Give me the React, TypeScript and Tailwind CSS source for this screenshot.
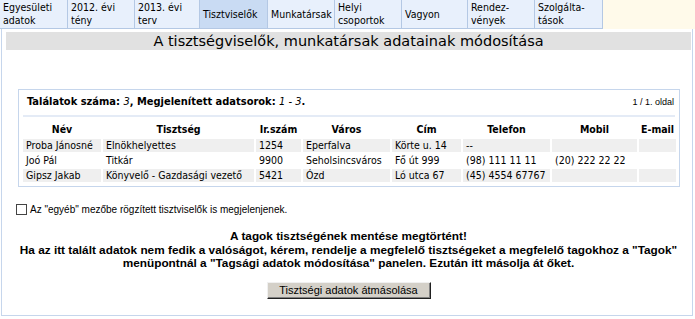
import React from "react";

const tabs: { lines: string[]; cls: string; active?: boolean }[] = [
  { lines: ["Egyesületi", "adatok"], cls: "w-[68px]" },
  { lines: ["2012. évi", "tény"], cls: "w-[67px]" },
  { lines: ["2013. évi", "terv"], cls: "w-[65px]" },
  { lines: ["Tisztviselők"], cls: "w-[68px]", active: true },
  { lines: ["Munkatársak"], cls: "w-[67px]" },
  { lines: ["Helyi", "csoportok"], cls: "w-[67px]" },
  { lines: ["Vagyon"], cls: "w-[66px]" },
  { lines: ["Rendez-", "vények"], cls: "w-[67px]" },
  { lines: ["Szolgálta-", "tások"], cls: "w-[68px]" },
];

const cols = [
  { h: "Név", w: "w-[78px]" },
  { h: "Tisztség", w: "w-[151px]" },
  { h: "Ir.szám", w: "w-[45px]" },
  { h: "Város", w: "w-[87px]" },
  { h: "Cím", w: "w-[69px]" },
  { h: "Telefon", w: "w-[87px]" },
  { h: "Mobil", w: "w-[85px]" },
  { h: "E-mail", w: "w-[36px]" },
];

const rows = [
  ["Proba Jánosné", "Elnökhelyettes", "1254", "Eperfalva", "Körte u. 14", "--", "", ""],
  ["Joó Pál", "Titkár", "9900", "Seholsincsváros", "Fő út 999", "(98) 111 11 11", "(20) 222 22 22", ""],
  ["Gipsz Jakab", "Könyvelő - Gazdasági vezető", "5421", "Ózd", "Ló utca 67", "(45) 4554 67767", "", ""],
];

export default function App() {
  return (
    <div className="w-[695px] h-[319px] bg-white overflow-hidden text-black font-['DejaVu_Sans_Condensed','DejaVu_Sans',Verdana,sans-serif]">
      <div className="flex h-[29px]">
        {tabs.map((t, i) => (
          <div
            key={i}
            className={`${t.cls} h-[29px] flex flex-col justify-center pl-[3px] text-[10.5px] leading-[13px] border-r border-b border-[#b4c8e4] ${
              t.active ? "bg-[#c9dbf3]" : "bg-[#e8f0fc]"
            }`}
          >
            {t.lines.map((l, j) => (
              <span key={j} className="whitespace-nowrap">
                {l}
              </span>
            ))}
          </div>
        ))}
        <div className="flex-1 bg-[#fffaea]" />
      </div>

      <div className="ml-[1px] w-[692px] h-[287px] border-l border-r border-b border-[#c6d6ec] pl-[4px] pr-[1px] pt-[3px]">
        <div className="h-[18px] bg-[#e1e1e1] flex items-center justify-center text-[14.5px] leading-[18px] font-['DejaVu_Sans',Verdana,sans-serif]">
          A tisztségviselők, munkatársak adatainak módosítása
        </div>

        <div className="mt-[39px] ml-[12px] w-[662px] border border-[#c6d6ec] pb-[2px]">
          <div className="h-[25px] flex items-center justify-between pl-[8px] pr-[5px]">
            <span className="text-[11px] font-bold">
              Találatok száma: <span className="italic font-normal">3</span>, Megjelenített adatsorok:{" "}
              <span className="italic font-normal">1 - 3</span>.
            </span>
            <span className="text-[9px] font-['Liberation_Sans',Arial,sans-serif]">1 / 1. oldal</span>
          </div>
          <div className="mx-[4px] h-[2px] bg-[#e4ebf6]" />
          <table className="mt-[1px] ml-[2px] table-fixed border-separate border-spacing-[2px] text-[10.5px]">
            <thead>
              <tr>
                {cols.map((c, i) => (
                  <th
                    key={i}
                    className={`${c.w} h-[17px] px-[2px] pt-[3px] pb-[1px] leading-[13px] font-bold text-center align-bottom whitespace-nowrap`}
                  >
                    {c.h}
                  </th>
                ))}
              </tr>
            </thead>
            <tbody>
              {rows.map((r, ri) => (
                <tr key={ri}>
                  {r.map((c, ci) => (
                    <td
                      key={ci}
                      className={`h-[13px] px-[3px] py-0 leading-[13px] whitespace-nowrap overflow-hidden ${
                        ri === 1 ? "bg-white" : "bg-[#efefef]"
                      }`}
                    >
                      {c}
                    </td>
                  ))}
                </tr>
              ))}
            </tbody>
          </table>
        </div>

        <div className="mt-[16px] ml-[10px] flex items-center gap-[3px] text-[10px] leading-[13px] font-['Liberation_Sans',Arial,sans-serif]">
          <span className="inline-block w-[11px] h-[11px] border border-[#444] bg-white" />
          <span>Az "egyéb" mezőbe rögzített tisztviselők is megjelenjenek.</span>
        </div>

        <div className="mt-[14px] text-center text-[11.8px] leading-[13.5px] font-bold font-['Liberation_Sans',Arial,sans-serif]">
          <div>A tagok tisztségének mentése megtörtént!</div>
          <div className="whitespace-nowrap">
            Ha az itt talált adatok nem fedik a valóságot, kérem, rendelje a megfelelő tisztségeket a megfelelő tagokhoz a "Tagok"
          </div>
          <div>menüpontnál a "Tagsági adatok módosítása" panelen. Ezután itt másolja át őket.</div>
        </div>

        <div className="mt-[11px] flex justify-center">
          <button className="w-[164px] h-[17px] bg-[#d4d0c8] border border-t-[#f0f0f0] border-l-[#f0f0f0] border-r-[#202020] border-b-[#202020] shadow-[inset_-1px_-1px_0_#808080] text-[11px] leading-[14px] font-['Liberation_Sans',Arial,sans-serif] text-black">
            Tisztségi adatok átmásolása
          </button>
        </div>
      </div>
    </div>
  );
}
